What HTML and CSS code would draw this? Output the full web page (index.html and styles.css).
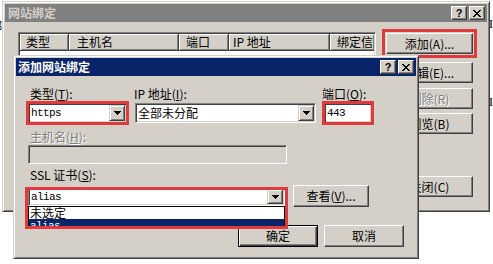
FILE: index.html
```html
<!DOCTYPE html>
<html lang="zh-CN">
<head>
<meta charset="utf-8">
<title>网站绑定</title>
<link rel="stylesheet" href="styles.css">
</head>
<body>
<div class="desk">
  <span class="peek peek-left">绑</span>
  <span class="peek peek-r1">I</span>
  <span class="peek peek-r2">I</span>

  <section class="win outer">
    <header class="title inactive">
      <span class="title-text">网站绑定</span>
      <span class="caps">
        <span class="cap cap-help">?</span>
        <span class="cap"><svg width="8" height="7" viewBox="0 0 8 7"><path d="M0 0h2v1H0zM6 0h2v1H6zM1 1h2v1H1zM5 1h2v1H5zM2 2h4v1H2zM3 3h2v1H3zM2 4h4v1H2zM1 5h2v1H1zM5 5h2v1H5zM0 6h2v1H0zM6 6h2v1H6z" fill="#000"/></svg></span>
      </span>
    </header>
    <div class="outer-body">
      <div class="list sunken">
        <div class="lhead">
          <div class="hcell c1">类型</div>
          <div class="hcell c2">主机名</div>
          <div class="hcell c3">端口</div>
          <div class="hcell c4">IP 地址</div>
          <div class="hcell c5">绑定信息</div>
        </div>
      </div>
      <div class="side">
        <button class="btn side-btn mark-add">添加(A)...</button>
        <button class="btn side-btn b-edit">编辑(E)...</button>
        <button class="btn side-btn b-del" disabled>删除(R)</button>
        <button class="btn side-btn b-browse">浏览(B)</button>
        <button class="btn side-btn b-close">关闭(C)</button>
      </div>
    </div>
  </section>

  <section class="win dialog">
    <header class="title active">
      <span class="title-text">添加网站绑定</span>
      <span class="caps">
        <span class="cap cap-help">?</span>
        <span class="cap"><svg width="8" height="7" viewBox="0 0 8 7"><path d="M0 0h2v1H0zM6 0h2v1H6zM1 1h2v1H1zM5 1h2v1H5zM2 2h4v1H2zM3 3h2v1H3zM2 4h4v1H2zM1 5h2v1H1zM5 5h2v1H5zM0 6h2v1H0zM6 6h2v1H6z" fill="#000"/></svg></span>
      </span>
    </header>
    <div class="dlg-body">
      <div class="row1">
        <div class="lbl l-type">类型(<u>T</u>):</div>
        <div class="lbl l-ip">IP 地址(<u>I</u>):</div>
        <div class="lbl l-port">端口(<u>O</u>):</div>
        <div class="combo sunken mark">
          <span class="val mono">https</span>
          <span class="drop"><svg width="7" height="4" viewBox="0 0 7 4"><path d="M0 0h7v1H0zM1 1h5v1H1zM2 2h3v1H2zM3 3h1v1H3z" fill="#000"/></svg></span>
        </div>
        <div class="combo sunken">
          <span class="val">全部未分配</span>
          <span class="drop"><svg width="7" height="4" viewBox="0 0 7 4"><path d="M0 0h7v1H0zM1 1h5v1H1zM2 2h3v1H2zM3 3h1v1H3z" fill="#000"/></svg></span>
        </div>
        <div class="combo sunken mark">
          <span class="val mono">443</span>
        </div>
      </div>
      <div class="lbl dis l-host">主机名(<u>H</u>):</div>
      <div class="sunken host"></div>
      <div class="lbl l-ssl">SSL 证书(<u>S</u>):</div>
      <div class="ssl-row">
        <div class="ssl-wrap">
          <div class="combo sunken ssl-combo">
            <span class="val mono">alias</span>
            <span class="drop"><svg width="7" height="4" viewBox="0 0 7 4"><path d="M0 0h7v1H0zM1 1h5v1H1zM2 2h3v1H2zM3 3h1v1H3z" fill="#000"/></svg></span>
          </div>
          <div class="droplist">
            <div class="opt">未选定</div>
            <div class="opt sel mono">alias</div>
          </div>
          <span class="ssl-mark"></span>
        </div>
        <button class="btn view">查看(<u>V</u>)...</button>
      </div>
      <div class="actions">
        <button class="btn act default">确定</button>
        <button class="btn act">取消</button>
      </div>
    </div>
  </section>
</div>
</body>
</html>
```

FILE: styles.css
```css
* { box-sizing: border-box; }

body {
  margin: 0;
  width: 493px;
  height: 264px;
  overflow: hidden;
  background: #fff;
  font-family: "Noto Sans CJK SC", "Liberation Sans", sans-serif;
  font-size: 12px;
  color: #000;
}

.desk {
  position: relative;
  width: 493px;
  height: 264px;
}

.peek {
  position: absolute;
  line-height: 12px;
  font-size: 12px;
}
.peek-left { left: -10px; top: 20px; }
.peek-r1 { left: 489px; top: 18px; font-family: "Liberation Serif", serif; }
.peek-r2 { left: 489px; top: 96px; font-family: "Liberation Serif", serif; }

/* classic window frame */
.win {
  position: absolute;
  background: #d4d0c8;
  border: 1px solid;
  border-color: #d4d0c8 #404040 #404040 #d4d0c8;
  box-shadow: inset 1px 1px #fff, inset -1px -1px #808080;
  padding: 2px;
  display: flex;
  flex-direction: column;
}

.outer { left: 2px; top: 1px; width: 488px; height: 211px; }
.dialog { left: 13px; top: 55px; width: 406px; height: 204px; }

.title {
  height: 18px;
  flex: none;
  display: flex;
  align-items: center;
  padding: 0 2px 0 2px;
  font-weight: bold;
  font-size: 12px;
}
.title-text { line-height: 18px; white-space: nowrap; }
.title.inactive { background: #808080; color: #d4d0c8; }
.title.inactive .title-text { padding-left: 1px; }
.title.active { background: #0a246a; color: #fff; }

.caps { margin-left: auto; display: flex; gap: 2px; }
.cap {
  width: 16px;
  height: 14px;
  background: #d4d0c8;
  border: 1px solid;
  border-color: #fff #404040 #404040 #fff;
  box-shadow: inset -1px -1px #808080;
  display: flex;
  align-items: center;
  justify-content: center;
  color: #000;
}
.cap-help {
  font: bold 11px/12px "Liberation Sans", sans-serif;
}

/* sunken field border */
.sunken {
  border: 1px solid;
  border-color: #808080 #fff #fff #808080;
  box-shadow: inset 1px 1px #404040, inset -1px -1px #d4d0c8;
  padding: 1px;
  background: #fff;
}

/* outer window body */
.outer-body {
  display: flex;
  align-items: flex-start;
  padding: 10px 0 0 13px;
}

.list {
  width: 358px;
  height: 160px;
  flex: none;
}
.lhead { display: flex; height: 17px; }
.hcell {
  flex: none;
  height: 17px;
  background: #d4d0c8;
  border-right: 1px solid #404040;
  border-bottom: 1px solid #404040;
  box-shadow: inset 1px 1px #fff, inset -1px -1px #808080;
  padding-left: 6px;
  line-height: 16px;
  white-space: nowrap;
  overflow: hidden;
}
.c1 { width: 49px; }
.c2 { width: 110px; padding-left: 8px; }
.c3 { width: 50px; padding-left: 7px; }
.c4 { width: 101px; padding-left: 4px; }
.c5 { flex: 1; min-width: 0; padding-left: 7px; border-right: none; }

.side {
  width: 87px;
  flex: none;
  margin-left: 10px;
  display: flex;
  flex-direction: column;
  padding-top: 1px;
}

.btn {
  font: inherit;
  font-size: 12px;
  line-height: 14px;
  background: #d4d0c8;
  color: #000;
  border: 1px solid;
  border-color: #fff #404040 #404040 #fff;
  box-shadow: inset -1px -1px #808080;
  padding: 0;
  margin: 0;
  display: flex;
  align-items: center;
  justify-content: center;
  white-space: nowrap;
}
.btn:disabled { color: #808080; text-shadow: 1px 1px #fff; }
.btn.default {
  border-color: #000;
  box-shadow: inset 1px 1px #fff, inset -1px -1px #404040, inset -2px -2px #808080;
}

.side-btn { width: 87px; height: 21px; flex: none; }
.b-edit { margin-top: 8px; }
.b-del { margin-top: 5px; }
.b-browse { margin-top: 4px; }
.b-close { margin-top: 42px; }

.mark-add { outline: 3px solid #e0393e; outline-offset: 1px; }

/* dialog body */
.dlg-body {
  padding: 11px 12px 0 12px;
  display: flex;
  flex-direction: column;
}

.lbl { line-height: 14px; white-space: nowrap; }
.lbl u { text-decoration-thickness: 1px; text-underline-offset: 1px; }
.dis { color: #808080; text-shadow: 1px 1px #fff; }

.row1 {
  display: grid;
  grid-template-columns: 99px 181px 48px;
  column-gap: 8px;
  row-gap: 2px;
}
.l-type { padding-left: 2px; }
.l-ip { margin-left: -1px; }
.l-port { margin-left: -2px; }

.combo { display: flex; height: 20px; }
.combo .val {
  flex: 1;
  min-width: 0;
  padding-left: 1px;
  line-height: 16px;
  white-space: nowrap;
  overflow: hidden;
}
.drop {
  width: 16px;
  flex: none;
  background: #d4d0c8;
  border: 1px solid;
  border-color: #d4d0c8 #404040 #404040 #d4d0c8;
  box-shadow: inset 1px 1px #fff, inset -1px -1px #808080;
  display: flex;
  align-items: center;
  justify-content: center;
}

.mono {
  font-family: "Liberation Mono", monospace;
  font-size: 11px;
  letter-spacing: -0.6px;
}

.mark { outline: 3px solid #e0393e; outline-offset: -1px; }

.l-host { margin-top: 7px; padding-left: 2px; }
.host { margin-top: 1px; width: 259px; height: 19px; background: #d4d0c8; }
.l-ssl { margin-top: 4px; padding-left: 2px; }

.ssl-row {
  margin-top: 3px;
  display: flex;
  align-items: flex-start;
}
.ssl-wrap {
  position: relative;
  z-index: 2;
  width: 257px;
  margin-top: 2px;
  flex: none;
}
.ssl-combo { height: 19px; }
.droplist {
  position: absolute;
  left: 0;
  top: 19px;
  width: 257px;
  height: 20px;
  background: #fff;
  border: 1px solid #000;
  border-bottom: none;
  overflow: hidden;
}
.opt {
  height: 12px;
  line-height: 12px;
  padding-left: 1px;
  white-space: nowrap;
}
.opt.sel { background: #0a246a; color: #fff; line-height: 14px; }
.ssl-mark {
  position: absolute;
  left: -3px;
  top: 0;
  width: 263px;
  height: 42px;
  border: 3px solid #e0393e;
  pointer-events: none;
}

.view { width: 76px; height: 22px; margin-left: 8px; flex: none; }

.actions {
  display: flex;
  justify-content: flex-end;
  gap: 6px;
  margin-top: 18px;
}
.act { width: 80px; height: 22px; }
```
